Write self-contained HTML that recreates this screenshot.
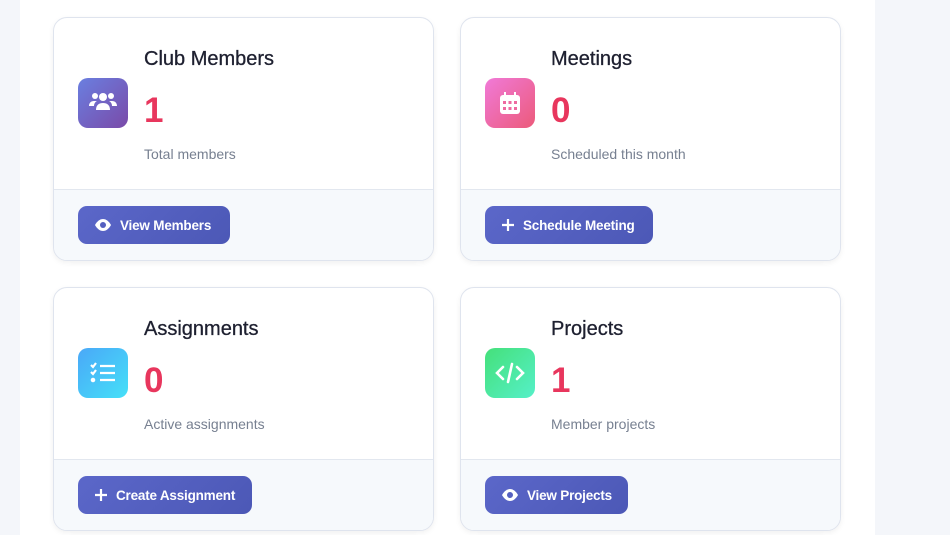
<!DOCTYPE html><html><head><style>
body{margin:0;width:950px;height:535px;background:#f4f6fa;font-family:"Liberation Sans",sans-serif;overflow:hidden;position:relative}
.panel{position:absolute;left:20px;top:0;width:855px;height:535px;background:#fff}
.card{position:absolute;width:379px;height:242px;border:1px solid #dfe4ee;border-radius:14px;background:#fff;box-shadow:0 2px 6px rgba(0,0,0,.06);overflow:hidden}
.foot{position:absolute;left:0;right:0;top:171px;bottom:0;background:#f6f9fc;border-top:1px solid #e2e7ef}
.ic{position:absolute;left:24px;top:60px;width:50px;height:50px;border-radius:10px;display:flex;align-items:center;justify-content:center}
.t{position:absolute;left:90px;top:30px;font-size:20px;color:#1e2030;font-weight:500;-webkit-text-stroke:0.3px #1e2030}
.n{position:absolute;left:90px;top:73px;font-size:35px;font-weight:bold;color:#e8365d}
.s{position:absolute;left:90px;top:128px;font-size:14px;color:#778091}
.b{position:absolute;left:24px;top:16px;height:38px;border-radius:9px;background:linear-gradient(135deg,#5b67c9,#4c58b6);color:#fff;font-size:13.5px;font-weight:bold;display:flex;align-items:center;padding:0 0 0 16px;box-sizing:border-box;white-space:nowrap;letter-spacing:-0.2px}
.b svg{margin-right:8px;flex:none}
</style></head><body>
<div class="panel"></div>
<div class="card" style="left:53px;top:17px">
<div class="ic" style="background:linear-gradient(135deg,#6a7fe0,#7a4aa8)"><svg width="30" height="26" viewBox="0 0 30 26" fill="#fff"><circle cx="15" cy="7" r="4"/><circle cx="7" cy="6" r="3"/><circle cx="23" cy="6" r="3"/><path d="M8 20c0-5 3-7 7-7s7 2 7 7z"/><path d="M1 16c0-3 2-5 5-5h3c-2 1-3 3-3 5z"/><path d="M29 16c0-3-2-5-5-5h-3c2 1 3 3 3 5z"/></svg></div>
<div class="t">Club Members</div><div class="n">1</div><div class="s">Total members</div>
<div class="foot"><div class="b" style="width:152px"><svg width="18" height="14" viewBox="0 0 18 14"><path d="M9 1C4 1 1 7 1 7s3 6 8 6 8-6 8-6-3-6-8-6z" fill="#fff"/><circle cx="9" cy="7" r="3" fill="#5560c0"/></svg>View Members</div></div></div>
<div class="card" style="left:460px;top:17px">
<div class="ic" style="background:linear-gradient(135deg,#f07ad8,#ec5a7a)"><svg width="22" height="24" viewBox="0 0 22 24" fill="#fff"><rect x="1" y="4" width="20" height="19" rx="3"/><rect x="5" y="1" width="2" height="5"/><rect x="15" y="1" width="2" height="5"/><g fill="#ee6aa0"><rect x="4" y="10" width="3" height="3"/><rect x="9.5" y="10" width="3" height="3"/><rect x="15" y="10" width="3" height="3"/><rect x="4" y="16" width="3" height="3"/><rect x="9.5" y="16" width="3" height="3"/><rect x="15" y="16" width="3" height="3"/></g></svg></div>
<div class="t">Meetings</div><div class="n">0</div><div class="s">Scheduled this month</div>
<div class="foot"><div class="b" style="width:168px"><svg width="14" height="14" viewBox="0 0 14 14"><path d="M7 1v12M1 7h12" stroke="#fff" stroke-width="2.2"/></svg>Schedule Meeting</div></div></div>
<div class="card" style="left:53px;top:287px">
<div class="ic" style="background:linear-gradient(135deg,#4aa8f8,#45e0f8)"><svg width="26" height="22" viewBox="0 0 26 22" fill="none" stroke="#fff" stroke-width="2.2"><path d="M1 3l2 2 3-4M1 10l2 2 3-4"/><circle cx="3" cy="18" r="1.2" fill="#fff"/><path d="M10 4h15M10 11h15M10 18h15"/></svg></div>
<div class="t">Assignments</div><div class="n">0</div><div class="s">Active assignments</div>
<div class="foot"><div class="b" style="width:174px"><svg width="14" height="14" viewBox="0 0 14 14"><path d="M7 1v12M1 7h12" stroke="#fff" stroke-width="2.2"/></svg>Create Assignment</div></div></div>
<div class="card" style="left:460px;top:287px">
<div class="ic" style="background:linear-gradient(135deg,#45e07a,#55f0c8)"><svg width="30" height="22" viewBox="0 0 30 22" fill="none" stroke="#fff" stroke-width="2.6" stroke-linecap="round"><path d="M8 5l-6 6 6 6M22 5l6 6-6 6M17 2l-4 18"/></svg></div>
<div class="t">Projects</div><div class="n">1</div><div class="s">Member projects</div>
<div class="foot"><div class="b" style="width:143px"><svg width="18" height="14" viewBox="0 0 18 14"><path d="M9 1C4 1 1 7 1 7s3 6 8 6 8-6 8-6-3-6-8-6z" fill="#fff"/><circle cx="9" cy="7" r="3" fill="#5560c0"/></svg>View Projects</div></div></div>
</body></html>
